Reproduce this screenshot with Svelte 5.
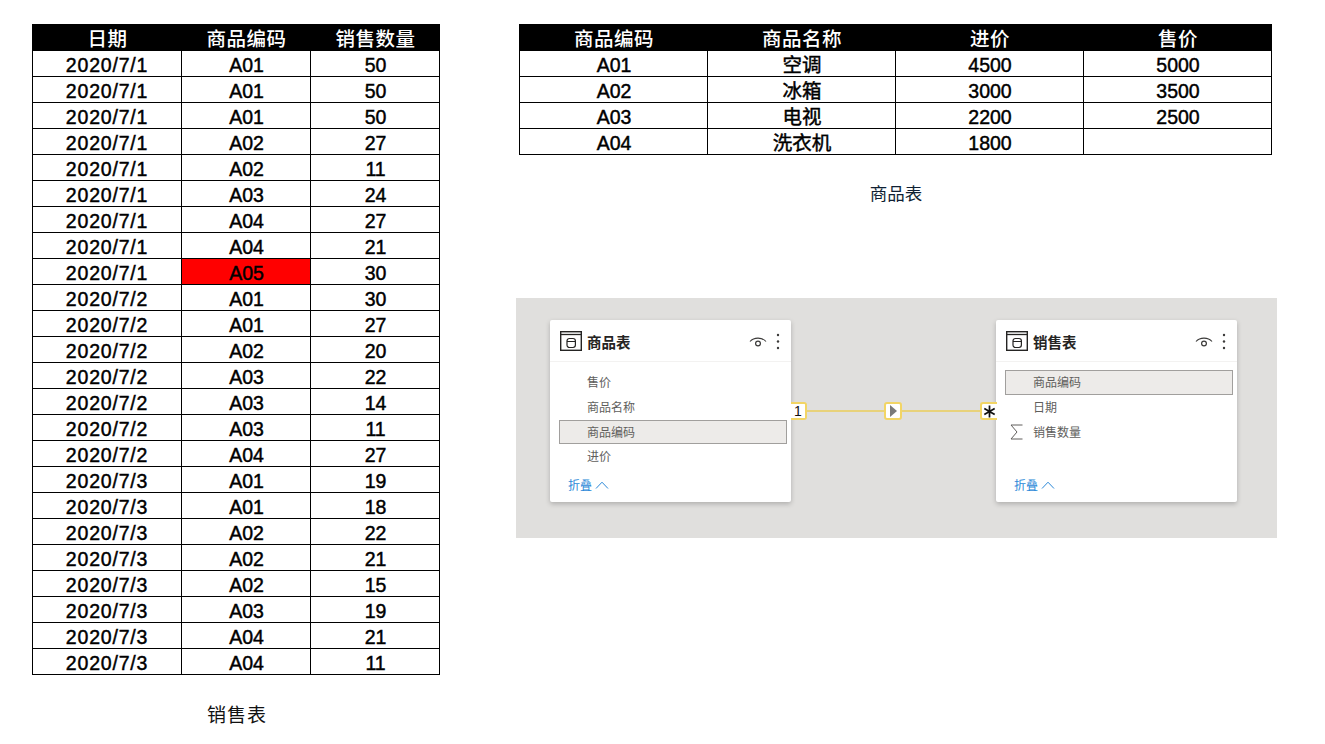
<script>
  const sales = [
    ['2020/7/1', 'A01', 50], ['2020/7/1', 'A01', 50], ['2020/7/1', 'A01', 50],
    ['2020/7/1', 'A02', 27], ['2020/7/1', 'A02', 11], ['2020/7/1', 'A03', 24],
    ['2020/7/1', 'A04', 27], ['2020/7/1', 'A04', 21], ['2020/7/1', 'A05', 30],
    ['2020/7/2', 'A01', 30], ['2020/7/2', 'A01', 27], ['2020/7/2', 'A02', 20],
    ['2020/7/2', 'A03', 22], ['2020/7/2', 'A03', 14], ['2020/7/2', 'A03', 11],
    ['2020/7/2', 'A04', 27], ['2020/7/3', 'A01', 19], ['2020/7/3', 'A01', 18],
    ['2020/7/3', 'A02', 22], ['2020/7/3', 'A02', 21], ['2020/7/3', 'A02', 15],
    ['2020/7/3', 'A03', 19], ['2020/7/3', 'A04', 21], ['2020/7/3', 'A04', 11]
  ];
  const goods = [
    ['A01', '空调', 4500, 5000],
    ['A02', '冰箱', 3000, 3500],
    ['A03', '电视', 2200, 2500],
    ['A04', '洗衣机', 1800, '']
  ];
  const goodsFields = ['售价', '商品名称', '商品编码', '进价'];
  const salesFields = ['商品编码', '日期', '销售数量'];
</script>

{#snippet tableIcon()}
  <svg class="table-icon" width="22" height="20" viewBox="0 0 22 20">
    <rect x="0.7" y="0.7" width="20.6" height="18.6" fill="none" stroke="#252423" stroke-width="1.4"/>
    <path d="M1 3.5h20" stroke="#252423" stroke-width="1.3"/>
    <rect x="7" y="7.5" width="8.4" height="9" rx="2.4" fill="none" stroke="#252423" stroke-width="1.2"/>
    <path d="M7 10.5h8.4" stroke="#252423" stroke-width="1"/>
  </svg>
{/snippet}

{#snippet cardHead(name)}
  <div class="card-head">
    {@render tableIcon()}
    <span class="card-title">{name}</span>
    <svg class="eye" width="18" height="12" viewBox="0 0 18 12">
      <path d="M1 5.5C5 1 13 1 17 5.5" fill="none" stroke="#3b3a39" stroke-width="1.1"/>
      <circle cx="9" cy="7.5" r="2.4" fill="none" stroke="#3b3a39" stroke-width="1.2"/>
    </svg>
    <svg class="dots" width="4" height="17" viewBox="0 0 4 17">
      <circle cx="2" cy="2" r="1.2" fill="#3b3a39"/>
      <circle cx="2" cy="8.5" r="1.2" fill="#3b3a39"/>
      <circle cx="2" cy="15" r="1.2" fill="#3b3a39"/>
    </svg>
  </div>
{/snippet}

{#snippet collapse()}
  <div class="collapse">折叠
    <svg width="14" height="8" viewBox="0 0 14 8"><path d="M1 7.5L7 1.2L13 7.5" fill="none" stroke="#2b88d8" stroke-width="1"/></svg>
  </div>
{/snippet}

<div class="page">
  <div class="left">
    <table class="sales">
      <thead>
        <tr><th>日期</th><th>商品编码</th><th>销售数量</th></tr>
      </thead>
      <tbody>
        {#each sales as row}
          <tr>
            <td class="date">{row[0]}</td>
            <td class:bad={row[1] === 'A05'}>{row[1]}</td>
            <td>{row[2]}</td>
          </tr>
        {/each}
      </tbody>
    </table>
    <div class="caption sales-cap">销售表</div>
  </div>

  <div class="right">
    <table class="goods">
      <thead>
        <tr><th>商品编码</th><th>商品名称</th><th>进价</th><th>售价</th></tr>
      </thead>
      <tbody>
        {#each goods as row}
          <tr>
            {#each row as cell}
              <td>{cell}</td>
            {/each}
          </tr>
        {/each}
      </tbody>
    </table>
    <div class="caption goods-cap">商品表</div>

    <div class="model">
      <div class="card">
        {@render cardHead('商品表')}
        <ul>
          {#each goodsFields as f}
            <li class:key={f === '商品编码'}>{f}</li>
          {/each}
        </ul>
        {@render collapse()}
      </div>
      <div class="card">
        {@render cardHead('销售表')}
        <ul>
          {#each salesFields as f}
            <li class:key={f === '商品编码'}>
              {#if f === '销售数量'}
                <svg class="sigma" width="13" height="16" viewBox="0 0 13 16"><path d="M12.5 1H1L7 8L1 15H12.5" fill="none" stroke="#605e5c" stroke-width="1"/></svg>
              {/if}{f}
            </li>
          {/each}
        </ul>
        {@render collapse()}
      </div>

      <div class="line"></div>
      <div class="tag one">1</div>
      <div class="tag arrow">
        <svg width="7" height="12" viewBox="0 0 7 12"><path d="M0 0L7 6L0 12Z" fill="#7a7a7a"/></svg>
      </div>
      <div class="tag many">
        <svg width="13" height="13" viewBox="0 0 12 12"><path d="M6 .5V11.5M1.2 3.2L10.8 8.8M10.8 3.2L1.2 8.8" stroke="#111" stroke-width="1.6"/></svg>
      </div>
    </div>
  </div>
</div>

<style>
  :global(body) {
    background: #fff;
    font-family: "Liberation Sans", "Noto Sans CJK SC", sans-serif;
  }
  .page {
    display: flex;
    gap: 79px;
    padding: 24px 0 0 32px;
    height: 744px;
    box-sizing: border-box;
  }
  .left {
    width: 408px;
  }
  .right {
    width: 753px;
  }
  table {
    border-collapse: collapse;
    table-layout: fixed;
    width: 100%;
    color: #000;
    font-family: "Liberation Sans", "Noto Sans CJK SC", sans-serif;
    font-size: 19.5px;
  }
  th {
    background: #000;
    color: #fff;
    height: 22px;
    padding: 3px 0 0 1px;
    border: 1px solid #000;
    font-weight: 500;
    line-height: 22px;
    letter-spacing: 0.5px;
  }
  td {
    height: 22px;
    padding: 3px 0 0 1px;
    border: 1px solid #000;
    text-align: center;
    line-height: 22px;
    font-weight: normal;
    -webkit-text-stroke: 0.45px #000;
  }
  td.date {
    padding-left: 0;
    letter-spacing: 0.8px;
  }
  .sales th:nth-child(1) { width: 147px; }
  .sales th:nth-child(2) { width: 127px; }
  .goods th { width: 25%; }
  td.bad {
    background: #ff0000;
  }
  .caption {
    font-family: "Noto Sans CJK SC", sans-serif;
    font-size: 18px;
    color: #111;
    text-align: center;
    line-height: 24px;
  }
  .sales-cap {
    margin-top: 27px;
    margin-left: 2px;
    font-size: 19px;
    letter-spacing: 1px;
  }
  .goods-cap {
    margin-top: 26px;
    font-size: 17.5px;
    color: #0f1f33;
    margin-left: 1px;
  }
  .model {
    position: relative;
    display: flex;
    justify-content: space-between;
    align-items: flex-start;
    width: 761px;
    height: 240px;
    box-sizing: border-box;
    margin: 93px 0 0 -3px;
    padding: 22px 40px 0 34px;
    background: #e0dfdd;
  }
  .card {
    width: 241px;
    height: 182px;
    background: #fff;
    border-radius: 2px;
    box-shadow: 0 2px 5px rgba(0, 0, 0, 0.22);
    font-family: "Noto Sans CJK SC", sans-serif;
    display: flex;
    flex-direction: column;
    position: relative;
    z-index: 1;
  }
  .card-head {
    display: flex;
    align-items: center;
    height: 41px;
    padding: 0 11px 0 10px;
    border-bottom: 1px solid #f3f2f1;
  }
  .card-title {
    margin: 1px 0 0 5px;
    font-size: 14.5px;
    font-weight: 700;
    color: #252423;
    flex: 1;
  }
  .eye {
    margin: 2px 9px 0 0;
  }
  .dots {
    margin-top: 2px;
  }
  ul {
    list-style: none;
    margin: 8.3px 0 0;
    padding: 0 4px 0 9px;
  }
  li {
    height: 24.7px;
    line-height: 24px;
    padding-left: 28px;
    box-sizing: border-box;
    font-size: 12px;
    color: #605e5c;
    position: relative;
  }
  li.key {
    background: #edebe9;
    border: 1px solid #a19f9d;
    padding-left: 27px;
    line-height: 22px;
  }
  .sigma {
    position: absolute;
    left: 5px;
    top: 4px;
  }
  .collapse {
    position: absolute;
    left: 18px;
    bottom: 9px;
    display: flex;
    align-items: center;
    gap: 3px;
    font-size: 12px;
    color: #2b88d8;
  }
  .line {
    position: absolute;
    left: 275px;
    top: 112px;
    width: 206px;
    height: 2px;
    background: #e8d27a;
  }
  .tag {
    position: absolute;
    top: 104px;
    height: 18px;
    box-sizing: border-box;
    background: #fff;
    border: 2px solid #f2d565;
    border-radius: 3px;
    display: flex;
    align-items: center;
    justify-content: center;
    font-family: "Liberation Sans", sans-serif;
    font-size: 14px;
    color: #111;
  }
  .tag.one {
    left: 275px;
    width: 16px;
    border-left: none;
    border-radius: 0 3px 3px 0;
    z-index: 2;
  }
  .tag.arrow {
    left: 368px;
    width: 18px;
  }
  .tag.many {
    left: 464px;
    width: 17px;
    border-right: none;
    border-radius: 3px 0 0 3px;
    z-index: 2;
  }
</style>
